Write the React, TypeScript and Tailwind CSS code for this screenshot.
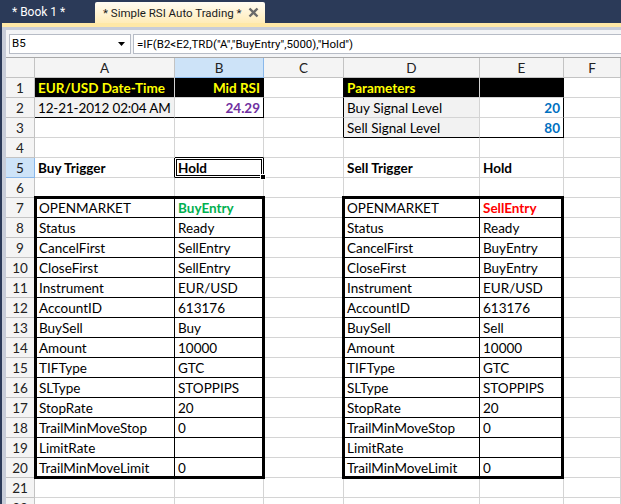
import React from 'react';

const W = ['w-[29px]', 'w-[140px]', 'w-[89px]', 'w-[80px]', 'w-[136px]', 'w-[84px]', 'flex-1'];
const LETTERS = ['A', 'B', 'C', 'D', 'E', 'F'];

type C = { t?: string; c?: string };

// rows 1-6 (and 21-22) are plain cells; rows 7-20 have the two boxed tables
const TOP: C[][] = [
  [
    { t: 'EUR/USD Date-Time', c: 'bg-black text-[#ffff00] font-bold' },
    { t: 'Mid RSI', c: 'bg-black text-[#ffff00] font-bold text-right border-r-black' },
    { c: 'border-r-black' },
    { t: 'Parameters', c: 'bg-black text-[#ffff00] font-bold' },
    { c: 'bg-black border-r-black' },
    {},
  ],
  [
    { t: '12-21-2012 02:04 AM', c: 'bg-[#f2f2f2] border-b-black tracking-[-0.15px]' },
    { t: '24.29', c: 'text-[#7030a0] font-bold text-right border-r-black border-b-black' },
    { c: 'border-r-black' },
    { t: 'Buy Signal Level', c: 'bg-[#f2f2f2]' },
    { t: '20', c: 'text-[#0070c0] font-bold text-right border-r-black' },
    {},
  ],
  [
    {},
    {},
    { c: 'border-r-black' },
    { t: 'Sell Signal Level', c: 'bg-[#f2f2f2] border-b-black' },
    { t: '80', c: 'text-[#0070c0] font-bold text-right border-r-black border-b-black' },
    {},
  ],
  [{}, { c: 'border-b-black' }, {}, {}, {}, {}],
  [
    { t: 'Buy Trigger', c: 'font-bold border-r-black' },
    { t: 'Hold', c: 'font-bold relative border-r-black border-b-black shadow-[inset_0_0_0_1px_#fff,inset_0_0_0_2px_#000]' },
    {},
    { t: 'Sell Trigger', c: 'font-bold' },
    { t: 'Hold', c: 'font-bold' },
    {},
  ],
  [{}, {}, {}, {}, {}, {}],
];

const BUY: [string, string][] = [
  ['OPENMARKET', 'BuyEntry'],
  ['Status', 'Ready'],
  ['CancelFirst', 'SellEntry'],
  ['CloseFirst', 'SellEntry'],
  ['Instrument', 'EUR/USD'],
  ['AccountID', '613176'],
  ['BuySell', 'Buy'],
  ['Amount', '10000'],
  ['TIFType', 'GTC'],
  ['SLType', 'STOPPIPS'],
  ['StopRate', '20'],
  ['TrailMinMoveStop', '0'],
  ['LimitRate', ''],
  ['TrailMinMoveLimit', '0'],
];

const SELL: [string, string][] = BUY.map(([k, v], i) => {
  if (i === 0) return [k, 'SellEntry'];
  if (i === 2 || i === 3) return [k, 'BuyEntry'];
  if (i === 6) return [k, 'Sell'];
  return [k, v];
});

const cellBase = 'h-5 shrink-0 border-r border-b border-[#d4d4d4] px-[3px] leading-[20px] whitespace-nowrap';

function RowHead({ n, active }: { n: number; active?: boolean }) {
  return (
    <div
      className={`w-[29px] h-5 shrink-0 border-r border-b text-center leading-[20px] text-[#222] ${
        active ? 'bg-[#cde3f8] border-[#8ab8ea]' : 'bg-[#f4f4f4] border-[#c3c3c3]'
      }`}
    >
      {n}
    </div>
  );
}

function PlainRow({ n, cells }: { n: number; cells: C[] }) {
  return (
    <div className="flex">
      <RowHead n={n} active={n === 5} />
      {cells.map((cell, i) => (
        <div key={i} className={`${cellBase} ${W[i + 1]} ${cell.c ?? ''}`}>
          {cell.t}
          {n === 5 && i === 1 && (
            <span className="absolute z-20 -right-[3px] -bottom-[3px] w-[6px] h-[6px] bg-black border border-white" />
          )}
        </div>
      ))}
    </div>
  );
}

function Box({ rows, first, wide, narrow, pos }: { rows: [string, string][]; first: string; wide: string; narrow: string; pos: string }) {
  return (
    <div className={`flex flex-col border-[3px] border-black bg-white -mt-[2px] -mb-[1px] ${pos}`}>
      {rows.map(([k, v], i) => {
        const h = i === 0 ? 'h-[19px] leading-[18px] border-b border-black' : i === rows.length - 1 ? 'h-[18px] leading-[20px]' : 'h-5 leading-[20px] border-b border-black';
        return (
          <div key={k} className={`flex shrink-0 ${h}`}>
            <div className={`${wide} shrink-0 border-r border-black px-[2px] whitespace-nowrap`}>{k}</div>
            <div className={`${narrow} px-[3px] whitespace-nowrap ${i === 0 ? first : ''}`}>{v}</div>
          </div>
        );
      })}
    </div>
  );
}

export default function App() {
  const font = "font-['Lato','Liberation_Sans',sans-serif] text-[13.5px]";
  return (
    <div className="w-[621px] h-[504px] overflow-hidden bg-[#2b3a58] flex flex-col">
      {/* document tabs */}
      <div className="h-[23px] shrink-0 flex items-end font-['Roboto','Liberation_Sans',sans-serif] whitespace-nowrap">
        <div className="w-[95px] h-[21px] pl-[12px] leading-[20px] text-white text-[12px]">* Book 1 *</div>
        <div className="w-[170px] h-[21px] rounded-t-[2px] bg-gradient-to-b from-[#fffcf3] to-[#ffecb8] flex items-center pl-[8px] pr-[6px] text-[#1b1b1b] text-[11.5px]">
          <span className="flex-1 leading-[20px]">* Simple RSI Auto Trading *</span>
          <svg width="11" height="11" viewBox="0 0 11 11" className="text-[#6a6a6a]">
            <path d="M1.5 1.5 L9.5 9.5 M9.5 1.5 L1.5 9.5" stroke="currentColor" strokeWidth="2.4" />
          </svg>
        </div>
      </div>

      <div className="flex-1 flex flex-col ml-[2px] min-h-0">
        <div className="h-[4px] shrink-0 bg-[#ffe8a6]" />
        <div className="h-[3px] shrink-0 bg-[#c7ccd8]" />
        <div className="flex flex-1 min-h-0">
          <div className="w-[4px] shrink-0 bg-[#c7ccd8]" />
          <div className="flex-1 flex flex-col bg-white min-w-0">
            {/* formula bar */}
            <div className="h-[27px] shrink-0 bg-[#f3f4f6] flex items-start pt-[4px] pl-[3px] font-['Roboto','Liberation_Sans',sans-serif] text-[11.5px] text-black">
              <div className="w-[122px] h-[20px] bg-white border border-[#b7bcc6] flex items-center pl-[2px] pr-[4px]">
                <span className="flex-1">B5</span>
                <svg width="8" height="5" viewBox="0 0 8 5">
                  <path d="M0 0 H7 L3.5 4 Z" fill="#000" />
                </svg>
              </div>
              <div className="ml-[2px] flex-1 h-[20px] bg-white border-y border-l border-[#b7bcc6] pl-[3px] leading-[18px] whitespace-nowrap">
                =IF(B2&lt;E2,TRD("A","BuyEntry",5000),"Hold")
              </div>
            </div>

            {/* sheet */}
            <div className={`flex-1 flex flex-col border-t border-[#a9a9a9] ${font} text-black`}>
              <div className="flex">
                <div className="w-[29px] h-5 shrink-0 bg-[#f4f4f4] border-r border-b border-[#c3c3c3]" />
                {LETTERS.map((l, i) => (
                  <div
                    key={l}
                    className={`${W[i + 1]} h-5 shrink-0 border-r border-b text-center leading-[20px] text-[#222] ${
                      l === 'B' ? 'bg-[#cde3f8] border-[#8ab8ea]' : 'bg-[#f4f4f4] border-[#c3c3c3]'
                    }`}
                  >
                    {l}
                  </div>
                ))}
              </div>

              {TOP.map((r, i) => (
                <PlainRow key={i} n={i + 1} cells={r} />
              ))}

              <div className="flex">
                <div className="flex flex-col">
                  {BUY.map((_, i) => (
                    <RowHead key={i} n={i + 7} />
                  ))}
                </div>
                <Box rows={BUY} first="text-[#00b050] font-bold" wide="w-[138px]" narrow="w-[87px]" pos="w-[231px] -ml-[1px] -mr-[1px] z-10" />
                <div className="flex flex-col">
                  {BUY.map((_, i) => (
                    <div key={i} className={`${cellBase} w-[80px]`} />
                  ))}
                </div>
                <Box rows={SELL} first="text-[#ff0000] font-bold" wide="w-[135px]" narrow="w-[81px]" pos="w-[222px] -ml-[2px] z-10" />
                <div className="flex flex-col flex-1">
                  {BUY.map((_, i) => (
                    <div key={i} className={`${cellBase} w-full`} />
                  ))}
                </div>
              </div>

              <PlainRow n={21} cells={[{}, {}, {}, {}, {}, {}]} />
              <PlainRow n={22} cells={[{}, {}, {}, {}, {}, {}]} />
            </div>
          </div>
        </div>
      </div>
    </div>
  );
}
